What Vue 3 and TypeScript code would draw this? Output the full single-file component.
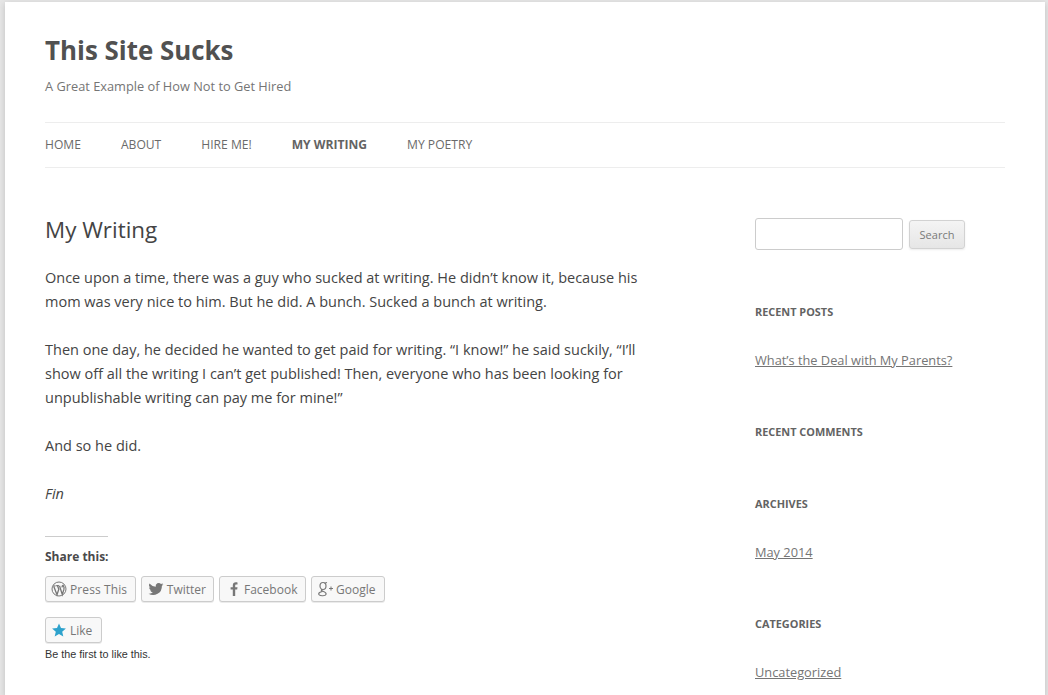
<script setup lang="ts">
const nav = [
  { label: 'Home', active: false },
  { label: 'About', active: false },
  { label: 'Hire Me!', active: false },
  { label: 'My Writing', active: true },
  { label: 'My Poetry', active: false },
]
</script>

<template>
  <div class="page">
    <header class="masthead">
      <h1 class="site-title">This Site Sucks</h1>
      <h2 class="tagline">A Great Example of How Not to Get Hired</h2>
      <nav class="nav">
        <a v-for="n in nav" :key="n.label" :class="{ active: n.active }">{{ n.label }}</a>
      </nav>
    </header>
    <div class="columns">
      <main class="content">
        <h1 class="entry-title">My Writing</h1>
        <p>Once upon a time, there was a guy who sucked at writing. He didn’t know it, because his mom was very nice to him. But he did. A bunch. Sucked a bunch at writing.</p>
        <p>Then one day, he decided he wanted to get paid for writing. “I know!” he said suckily, “I’ll show off all the writing I can’t get published! Then, everyone who has been looking for unpublishable writing can pay me for mine!”</p>
        <p>And so he did.</p>
        <p><em>Fin</em></p>
        <div class="rule"></div>
        <h3 class="share-title">Share this:</h3>
        <div class="share">
          <a class="btn press">
            <svg width="16" height="16" viewBox="0 0 16 16"><circle cx="8" cy="8" r="7" fill="none" stroke="#777" stroke-width="1"/><path d="M2.700 5.200 6 13.800 7.800 8.300 6.500 4.700M5.200 4.700h2.700M8.500 4.700 11.300 13.500 12.900 8.400C13.300 7 13 5.400 12 4.300c-.9.200-1.100 1.300-.6 2.100" fill="none" stroke="#777" stroke-width="1.300"/><path d="M2.200 4.900h2.500" stroke="#777" stroke-width="1"/></svg>
            Press This
          </a>
          <a class="btn twitter">
            <svg width="16" height="16" viewBox="0 0 16 16"><path fill="#777" d="M15.500 3.300c-.6.300-1.200.4-1.800.5.600-.4 1.100-1 1.400-1.700-.6.400-1.300.6-2 .8A3.100 3.100 0 0 0 7.800 5.700 8.800 8.800 0 0 1 1.500 2.500a3.100 3.100 0 0 0 1 4.100c-.5 0-1-.2-1.400-.4 0 1.500 1.100 2.800 2.500 3.100-.5.100-.9.100-1.400 0 .4 1.200 1.500 2.100 2.900 2.100A6.200 6.200 0 0 1 .5 12.700 8.800 8.800 0 0 0 14 4.900c.6-.4 1.100-1 1.500-1.600z"/></svg>
            Twitter
          </a>
          <a class="btn fb">
            <svg width="16" height="16" viewBox="0 0 16 16"><path fill="#777" d="M6.800 15V8.400H4.600V6.200h2.200V4.400C6.800 2.400 8 1.300 9.800 1.300c.8 0 1.500.1 1.700.1v2.100h-1.100c-1 0-1.200.5-1.200 1.200v1.500h2.300l-.3 2.200h-2V15z"/></svg>
            Facebook
          </a>
          <a class="btn gp">
            <svg width="16" height="16" viewBox="0 0 16 16"><ellipse cx="5" cy="5" rx="3" ry="3.500" fill="none" stroke="#777" stroke-width="1.200"/><path d="M4 8.200C2.800 9 3.400 9.800 5 10.300 7 11 8.500 11.600 8 13.300 7.500 15 2.500 15.300 1 13.600.2 12.400 1.500 11 4.500 10.500M6.500 2.300 9 1.500" fill="none" stroke="#777" stroke-width="1.200"/><path d="M11 7.500h4M13 5.500v4" stroke="#777" stroke-width="1" fill="none"/></svg>
            Google
          </a>
        </div>
        <a class="btn like">
          <svg width="16" height="16" viewBox="0 0 16 16"><path fill="#2ea2cc" d="M8 1.500l2 4.500 4.900.5-3.700 3.200 1.100 4.800L8 12l-4.300 2.500 1.100-4.800L1.100 6.500 6 6z"/></svg>
          Like
        </a>
        <div class="first">Be the first to like this.</div>
      </main>
      <aside class="sidebar">
        <form class="search" @submit.prevent>
          <input class="search-input" type="text" />
          <button class="search-btn" type="submit">Search</button>
        </form>
        <h3 class="w-title posts">Recent Posts</h3>
        <a class="w-link">What’s the Deal with My Parents?</a>
        <h3 class="w-title comments">Recent Comments</h3>
        <h3 class="w-title archives">Archives</h3>
        <a class="w-link">May 2014</a>
        <h3 class="w-title categories">Categories</h3>
        <a class="w-link">Uncategorized</a>
      </aside>
    </div>
  </div>
</template>

<style>
html, body { margin: 0; height: 100%; overflow: hidden; background: #e6e6e6; }
</style>

<style scoped>
.page {
  box-sizing: border-box;
  width: 1040px;
  height: 693px;
  margin: 2px 0 0 5px;
  padding: 0 40px;
  overflow: hidden;
  background: #fff;
  box-shadow: 0 2px 6px rgba(100, 100, 100, 0.3);
  font-family: "Open Sans", sans-serif;
  font-size: 14.5px;
  line-height: 24px;
  color: #444;
}
.masthead { padding-top: 31px; }
.site-title { margin: 0; font-size: 25.9px; line-height: 34px; font-weight: 700; color: #515151; }
.tagline { margin: 9px 0 0; font-size: 12.8px; line-height: 20px; font-weight: 400; color: #757575; }
.nav {
  display: flex;
  gap: 40px;
  margin-top: 26px;
  height: 44px;
  align-items: center;
  border-top: 1px solid #ededed;
  border-bottom: 1px solid #ededed;
  font-size: 12.1px;
  text-transform: uppercase;
  color: #6a6a6a;
}
.nav .active { font-weight: 700; color: #636363; }
.columns { display: flex; margin-top: 50px; }
.content { width: 624px; flex: none; }
.entry-title { margin: 0 0 24px; font-size: 22.4px; line-height: 24px; font-weight: 400; color: #444; }
.content p { margin: 0 0 24px; }
.rule { width: 63px; border-top: 1px solid #ccc; margin-top: 30px; }
.share-title { margin: 8px 0 0; font-size: 12px; line-height: 24px; font-weight: 700; color: #4a4a4a; }
.share { display: flex; gap: 5px; margin-top: 7px; }
.btn {
  box-sizing: border-box;
  display: inline-flex;
  align-items: center;
  gap: 3px;
  height: 26px;
  padding: 2px 7px 0 5px;
  border: 1px solid #ccc;
  border-radius: 3px;
  background: #f8f8f8;
  box-shadow: 0 1px 0 rgba(0, 0, 0, 0.08);
  font-size: 12px;
  line-height: 20px;
  color: #777;
}
.btn svg { margin-top: -2px; }
.press { width: 91px; letter-spacing: 0.1px; }
.twitter { width: 73px; padding-left: 6px; }
.fb { width: 87px; padding-left: 6px; gap: 2px; }
.gp { width: 74px; padding-left: 6px; gap: 2px; }
.like { width: 57px; margin-top: 15px; }
.first {
  margin-top: 2px;
  font-family: "Liberation Sans", Arial, sans-serif;
  font-size: 10.8px;
  line-height: 14px;
  color: #333;
}
.sidebar { margin-left: 86px; width: 250px; flex: none; }
.search { display: flex; align-items: flex-start; gap: 6px; }
.search-input {
  box-sizing: border-box;
  width: 148px;
  height: 32px;
  padding: 0;
  background: #fff;
  border: 1px solid #ccc;
  border-radius: 3px;
}
.search-btn {
  box-sizing: border-box;
  width: 56px;
  height: 29px;
  padding: 0;
  margin-top: 2px;
  border: 1px solid #d2d2d2;
  border-radius: 3px;
  background: linear-gradient(#f4f4f4, #e6e6e6);
  box-shadow: 0 1px 2px rgba(64, 64, 64, 0.1);
  font-family: "Open Sans", sans-serif;
  font-size: 11px;
  color: #7a7a7a;
}
.w-title { margin: 0; font-size: 10.9px; line-height: 20px; font-weight: 700; text-transform: uppercase; color: #636363; }
.w-link { display: block; width: max-content; font-size: 12.8px; line-height: 16px; color: #757575; text-decoration: underline; }
.posts { margin-top: 52px; }
.posts + .w-link { margin-top: 30px; }
.comments { margin-top: 54px; }
.archives { margin-top: 52px; }
.archives + .w-link { margin-top: 30px; }
.categories { margin-top: 54px; }
.categories + .w-link { margin-top: 30px; }
</style>
